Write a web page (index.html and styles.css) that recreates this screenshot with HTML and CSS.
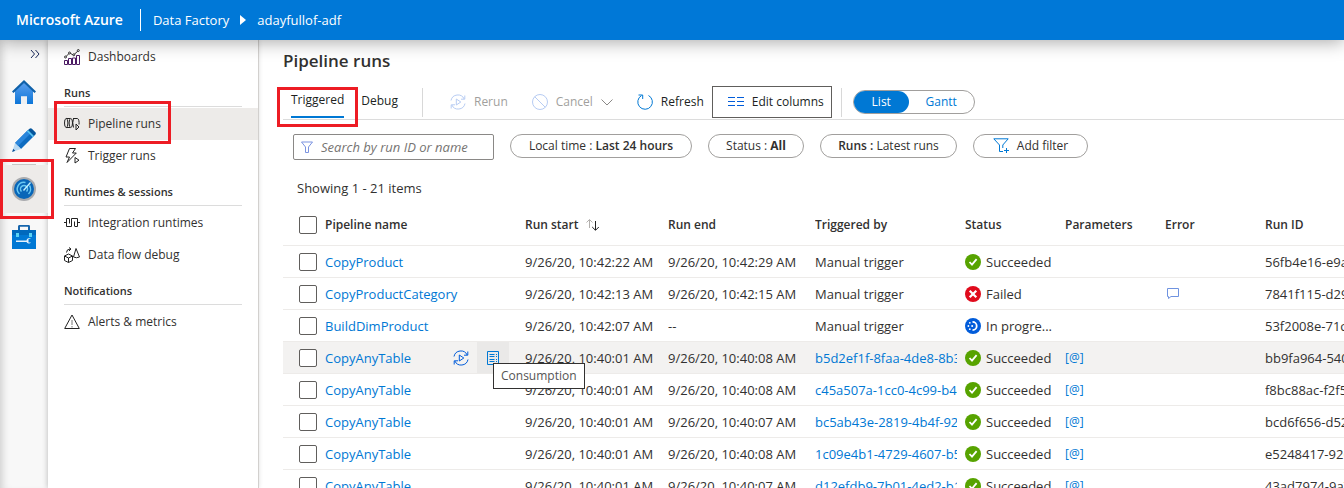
FILE: index.html
```html
<!DOCTYPE html>
<html lang="en">
<head>
<meta charset="utf-8">
<meta name="viewport" content="width=device-width, initial-scale=1">
<title>Pipeline runs - Data Factory</title>
<link rel="stylesheet" href="styles.css">
</head>
<body>
<svg class="sprite" aria-hidden="true">
  <symbol id="ok" viewBox="0 0 16 16"><circle cx="8" cy="8" r="8" fill="#57a300"/><path d="M4.500 8l2.500 2.600 4.600-5.400" fill="none" stroke="#fff" stroke-width="1.800"/></symbol>
  <symbol id="fail" viewBox="0 0 16 16"><circle cx="8" cy="8" r="8" fill="#e00b1c"/><path d="M4.700 4.700l6.600 6.600M11.300 4.700l-6.600 6.600" stroke="#fff" stroke-width="2.200"/></symbol>
  <symbol id="progress" viewBox="0 0 16 16"><circle cx="8" cy="8" r="8" fill="#015cda"/><path d="M7.500 3.800a4.200 4.200 0 0 1 0 8.400" fill="none" stroke="#fff" stroke-width="1.800"/><g fill="#fff"><circle cx="4.800" cy="4.800" r=".9"/><circle cx="3.400" cy="8" r=".9"/><circle cx="4.800" cy="11.200" r=".9"/><circle cx="7.200" cy="8" r="1"/></g></symbol>
  <symbol id="rerun" viewBox="0 0 16 16"><path d="M1 6.500A7 7 0 0 1 14.200 5M15 9.500A7 7 0 0 1 1.800 11M14.800 1.500V5.200H11M1.200 14.500V10.800H5M6.300 5v6l4.500-3z" fill="none" stroke="currentColor"/></symbol>
</svg>

<header class="topbar">
  <a class="brand" href="#">Microsoft Azure</a>
  <nav class="crumbs" aria-label="Breadcrumb">
    <a href="#">Data Factory</a>
    <svg class="crumb-arrow" viewBox="0 0 6 10"><path d="M0 0l6 5-6 5z" fill="#fff"/></svg>
    <a href="#">adayfullof-adf</a>
  </nav>
</header>

<div class="shell">
  <nav class="rail" aria-label="Hubs">
    <button class="expand" aria-label="Expand"><svg width="10" height="10" viewBox="0 0 10 10"><path d="M1 1l3.500 4L1 9M5.500 1L9 5 5.500 9" fill="none" stroke="#1b2a5c"/></svg></button>
    <a class="hub" href="#" aria-label="Home"><svg width="24" height="24" viewBox="0 0 24 24"><defs><linearGradient id="hg" x1="0" y1="0" x2="0" y2="1"><stop offset="0" stop-color="#5ea0ef"/><stop offset="1" stop-color="#0d76d8"/></linearGradient></defs><path d="M12 1.500L3 10.500V24h6v-7.500h6V24h6V10.500z" fill="url(#hg)"/><path d="M9 16.500h6V24H9z" fill="#eef0f2"/><path d="M12 0L0 11.500 1.500 13 12 3l10.500 10 1.500-1.500z" fill="#0f61a9"/></svg></a>
    <a class="hub" href="#" aria-label="Author"><svg width="24" height="24" viewBox="0 0 24 24"><path d="M3 15L15.500 2.500l6 6L9 21z" fill="#0f6cc0"/><path d="M3 15L15.500 2.500l3 3L6 18z" fill="#2a86dc"/><path d="M15.500 2.500L17.500.7q1.200-1 2.400 0l3.500 3.600q.9 1 0 2.200L21.500 8.500z" fill="#05559c"/><path d="M14.800 3.200l1.200-1.200 6 6-1.200 1.200z" fill="#5ac4f1"/><path d="M3 15l6 6-8.800 3z" fill="#b9d9f2"/><path d="M1.200 20.800l2 2-3 1.200z" fill="#0a4f95"/></svg></a>
    <a class="hub active" href="#" aria-label="Monitor" aria-current="page"><svg width="24" height="24" viewBox="0 0 24 24"><circle cx="12" cy="12" r="12" fill="#a9abae"/><circle cx="12" cy="12" r="10" fill="#0866b8"/><path d="M7.500 17a6.700 6.700 0 0 1 6-11.500" fill="none" stroke="#69c8f2" stroke-width="1.500"/><path d="M17.500 8.500a6.700 6.700 0 0 1-1 8.500" fill="none" stroke="#69c8f2" stroke-width="1.500"/><path d="M9.500 14.500a3.500 3.500 0 1 1 5 0" fill="none" stroke="#69c8f2" stroke-width="1.500"/><path d="M11 13l7-8 1 1-7 8z" fill="#c3f1ff"/></svg></a>
    <a class="hub" href="#" aria-label="Manage"><svg width="24" height="24" viewBox="0 0 24 24"><path d="M7 5V1.500q0-.7 1-.7h8q1 0 1 .7V5" fill="none" stroke="#1766ad" stroke-width="2"/><path d="M0 5h24v19H0z" fill="#0078d4"/><path d="M0 5h24v5H0z" fill="#0069bd"/><path d="M4 8h3v4H4zM17 8h3v4h-3z" fill="#5ad2f4"/><path d="M4 15.500h10.500a2.600 2.600 0 0 1 4.500-1.500h-2.500v3.500H19a2.600 2.600 0 0 1-4.500-.5H4z" fill="#e6f2fb"/></svg></a>
  </nav>

  <nav class="side" aria-label="Monitor">
    <a class="side-item" href="#"><svg class="ico" viewBox="0 0 16 16" fill="none"><path d="M.5 15.500v-4h3v4zM4.500 15.500v-6h3v6zM8.500 15.500V9h3v6.500zM12.500 15.500v-9h3v9z" stroke="#4b1a63"/><path d="M1.500 8l4-4 4 2 5-4.500" stroke="#333"/><g fill="#fff" stroke="#333"><circle cx="1.500" cy="8" r="1"/><circle cx="5.500" cy="4" r="1"/><circle cx="9.800" cy="5.800" r="1"/><circle cx="14.300" cy="1.500" r="1"/></g></svg>Dashboards</a>
    <h2 class="side-title">Runs</h2>
    <a class="side-item current" href="#" aria-current="page"><svg class="ico" viewBox="0 0 16 16" fill="none" stroke="#222"><ellipse cx="2.200" cy="7" rx="1.700" ry="4.500"/><path d="M2.200 2.500h4M2.200 11.500h4M9 2.500h4.500a1.800 4.500 0 0 1 1.500 6"/><ellipse cx="6.800" cy="7" rx="1.700" ry="4.500"/><path d="M9.500 2.500q-1.500 4 0 9M12 8v6l3-3z"/></svg>Pipeline runs</a>
    <a class="side-item" href="#"><svg class="ico" viewBox="0 0 16 16" fill="none" stroke="#222"><path d="M5.500.5h6L8.500 5h3.800L3 14.500 5.500 9H2zM11 9.500v5.500l4-2.800z"/></svg>Trigger runs</a>
    <h2 class="side-title">Runtimes &amp; sessions</h2>
    <a class="side-item" href="#"><svg class="ico" viewBox="0 0 16 16" fill="none" stroke="#222"><path d="M0 7.500h2.500M13.500 7.500H16M5 3.500H2.500v8H7.500V3.500H13.500v8H11M5.500 3.500v5M10.500 11.500v-5"/></svg>Integration runtimes</a>
    <a class="side-item" href="#"><svg class="ico" viewBox="0 0 16 16" fill="none" stroke="#222"><path d="M.5 9l4-2 4 2v4.500l-4 2-4-2zM.5 9l4 2 4-2M4.500 11v4.500M2.500 5.500q0-3.500 4-3.500M5 .5L7 2 5 4M12 1.500l3.500 8.500q-3 1.500-6 0z"/></svg>Data flow debug</a>
    <h2 class="side-title">Notifications</h2>
    <a class="side-item" href="#"><svg class="ico" viewBox="0 0 16 16" fill="none" stroke="#222"><path d="M8 1l7.300 13.500H.7z"/><path d="M8 6v5M8 12v1.500" stroke="#777"/></svg>Alerts &amp; metrics</a>
  </nav>

  <main class="main">
    <h1 class="title">Pipeline runs</h1>
    <div class="toolbar">
      <button class="tab selected">Triggered</button>
      <button class="tab">Debug</button>
      <span class="sep"></span>
      <button class="cmd" disabled><svg class="ico" viewBox="0 0 16 16"><use href="#rerun"/></svg>Rerun</button>
      <button class="cmd" disabled><svg class="ico" viewBox="0 0 16 16" fill="none" stroke="currentColor"><circle cx="8" cy="8" r="7.500"/><path d="M2.700 2.700l10.600 10.600"/></svg>Cancel<svg class="chev" viewBox="0 0 12 7"><path d="M.5.500L6 6 11.500.500" fill="none" stroke="#8a8886"/></svg></button>
      <button class="cmd"><svg class="ico" viewBox="0 0 16 16" fill="none" stroke="currentColor"><path d="M11.500 1.500A7.300 7.300 0 1 1 4.500 1.600M1.500 1h4.200v4"/></svg>Refresh</button>
      <button class="cmd framed"><svg class="ico" viewBox="0 0 16 16" stroke="#015cda"><path d="M0 3.500h7M9 3.500h7M0 7.500h7M9 7.500h7M0 11.500h7M9 11.500h7"/></svg>Edit columns</button>
      <span class="sep last"></span>
      <div class="toggle"><button class="opt on">List</button><button class="opt">Gantt</button></div>
    </div>

    <div class="filters">
      <label class="search"><svg viewBox="0 0 12 12"><path d="M.5 1h11L7.500 6v5.500h-3V6z" fill="none" stroke="#7b93e0"/></svg><input type="text" placeholder="Search by run ID or name" aria-label="Search by run ID or name"></label>
      <button class="pill time">Local time :&nbsp;<b>Last 24 hours</b></button>
      <button class="pill status-pill">Status :&nbsp;<b class="strong">All</b></button>
      <button class="pill runs"><b>Runs :</b>&nbsp;Latest runs</button>
      <button class="pill add"><svg class="ico" viewBox="0 0 16 16" fill="none" stroke="#0078d4"><path d="M10 13.500H6.500V7L.8.800h14.400L9.800 7v3M13.500 10v5M11 12.500h5"/></svg>Add filter</button>
    </div>

    <p class="count">Showing 1 - 21 items</p>

    <table class="grid">
      <colgroup><col class="c-check"><col class="c-name"><col class="c-start"><col class="c-end"><col class="c-by"><col class="c-sm"><col class="c-sm"><col class="c-sm"><col></colgroup>
      <thead>
        <tr><th><input type="checkbox" aria-label="Select all"></th><th>Pipeline name</th><th>Run start<svg class="sort" viewBox="0 0 16 12" fill="none"><path d="M4.500 9V.8M1.500 3.500l3-3 3 3" stroke="#b3b0ad"/><path d="M10.500 2v9M7.200 8l3.300 3.300L13.800 8" stroke="#222"/></svg></th><th>Run end</th><th>Triggered by</th><th>Status</th><th>Parameters</th><th>Error</th><th>Run ID</th></tr>
      </thead>
      <tbody>
        <tr><td><input type="checkbox" aria-label="Select CopyProduct"></td><td><a href="#">CopyProduct</a></td><td>9/26/20, 10:42:22 AM</td><td>9/26/20, 10:42:29 AM</td><td>Manual trigger</td><td><svg class="state"><use href="#ok"/></svg>Succeeded</td><td></td><td></td><td>56fb4e16-e9a</td></tr>
        <tr><td><input type="checkbox" aria-label="Select CopyProductCategory"></td><td><a href="#">CopyProductCategory</a></td><td>9/26/20, 10:42:13 AM</td><td>9/26/20, 10:42:15 AM</td><td>Manual trigger</td><td><svg class="state"><use href="#fail"/></svg>Failed</td><td></td><td><button class="note" aria-label="Error details"><svg width="14" height="12" viewBox="0 0 14 12"><path d="M1.500 1.500h11v8H5L2.500 11.500v-2h-1z" fill="none" stroke="#6f93e0"/></svg></button></td><td>7841f115-d29</td></tr>
        <tr><td><input type="checkbox" aria-label="Select BuildDimProduct"></td><td><a href="#">BuildDimProduct</a></td><td>9/26/20, 10:42:07 AM</td><td>--</td><td>Manual trigger</td><td><svg class="state"><use href="#progress"/></svg>In progre...</td><td></td><td></td><td>53f2008e-71c</td></tr>
        <tr class="hovered"><td><input type="checkbox" aria-label="Select CopyAnyTable"></td><td class="with-actions"><div class="name-row"><a href="#">CopyAnyTable</a><button class="act" aria-label="Rerun"><svg class="ico" viewBox="0 0 16 16"><use href="#rerun"/></svg></button><button class="act hot" aria-label="Consumption"><svg width="12" height="14" viewBox="0 0 12 14" fill="none" stroke="#0078d4"><path d="M.5.500h11v13H.5zM2.500 3.500h5M2.500 5.500h5M2.500 8.500h5M2.500 10.500h5M9 3.500h1M9 5.500h1M9 8.500h1M9 10.500h1"/></svg></button></div><span class="tip" role="tooltip">Consumption</span></td><td>9/26/20, 10:40:01 AM</td><td>9/26/20, 10:40:08 AM</td><td><a href="#">b5d2ef1f-8faa-4de8-8b3</a></td><td><svg class="state"><use href="#ok"/></svg>Succeeded</td><td><a class="param" href="#">[@]</a></td><td></td><td>bb9fa964-540</td></tr>
        <tr><td><input type="checkbox" aria-label="Select CopyAnyTable"></td><td><a href="#">CopyAnyTable</a></td><td>9/26/20, 10:40:01 AM</td><td>9/26/20, 10:40:08 AM</td><td><a href="#">c45a507a-1cc0-4c99-b4c</a></td><td><svg class="state"><use href="#ok"/></svg>Succeeded</td><td><a class="param" href="#">[@]</a></td><td></td><td>f8bc88ac-f2f5</td></tr>
        <tr><td><input type="checkbox" aria-label="Select CopyAnyTable"></td><td><a href="#">CopyAnyTable</a></td><td>9/26/20, 10:40:01 AM</td><td>9/26/20, 10:40:07 AM</td><td><a href="#">bc5ab43e-2819-4b4f-923</a></td><td><svg class="state"><use href="#ok"/></svg>Succeeded</td><td><a class="param" href="#">[@]</a></td><td></td><td>bcd6f656-d52</td></tr>
        <tr><td><input type="checkbox" aria-label="Select CopyAnyTable"></td><td><a href="#">CopyAnyTable</a></td><td>9/26/20, 10:40:01 AM</td><td>9/26/20, 10:40:08 AM</td><td><a href="#">1c09e4b1-4729-4607-b5</a></td><td><svg class="state"><use href="#ok"/></svg>Succeeded</td><td><a class="param" href="#">[@]</a></td><td></td><td>e5248417-926</td></tr>
        <tr><td><input type="checkbox" aria-label="Select CopyAnyTable"></td><td><a href="#">CopyAnyTable</a></td><td>9/26/20, 10:40:01 AM</td><td>9/26/20, 10:40:07 AM</td><td><a href="#">d12efdb9-7b01-4ed2-b1</a></td><td><svg class="state"><use href="#ok"/></svg>Succeeded</td><td><a class="param" href="#">[@]</a></td><td></td><td>43ad7974-9a7</td></tr>
      </tbody>
    </table>
  </main>
</div>
</body>
</html>
```
FILE: styles.css
```css
*, *::before, *::after { box-sizing: border-box; }
body {
  margin: 0;
  height: 100vh;
  display: flex;
  flex-direction: column;
  overflow: hidden;
  background: #fff;
  color: #323130;
  font: 12px/16px "Segoe UI", "Open Sans", "Noto Sans", sans-serif;
}
a { color: #0078d4; text-decoration: none; }
button { font: inherit; color: inherit; background: none; border: 0; padding: 0; }
b { font-weight: 600; }
.sprite { display: none; }
.ico { width: 16px; height: 16px; flex: none; }

.topbar {
  flex: none;
  position: relative;
  z-index: 5;
  display: flex;
  align-items: center;
  height: 40px;
  padding-left: 16px;
  background: #0078d7;
  box-shadow: 0 2px 18px rgba(0, 0, 0, .35);
}
.topbar a { color: #fff; }
.topbar .brand { font-size: 14px; font-weight: 600; padding-right: 17px; }
.crumbs { display: flex; align-items: center; height: 22px; padding-left: 12px; border-left: 1px solid #fff; font-size: 13px; }
.crumb-arrow { width: 6px; height: 10px; margin: 0 11px; }

.shell { flex: 1; display: flex; min-height: 0; }

.rail {
  flex: none;
  width: 48px;
  display: flex;
  flex-direction: column;
  background: #f8f8f8;
  box-shadow: inset 8px 0 8px -6px rgba(0, 0, 0, .18);
}
.expand { height: 28px; padding: 0 8px 0 0; text-align: right; }
.expand svg { display: block; margin-left: auto; }
.hub { position: relative; display: flex; align-items: center; justify-content: center; height: 48px; }
.hub.active { margin-top: 1px; background: #edebe9; }
.hub.active::before { content: ""; position: absolute; top: -1px; left: 12px; width: 24px; height: 1px; background: #c8c6c4; }
.hub.active::after { content: ""; position: absolute; z-index: 3; inset: -6px; left: 0; border: 3px solid #ed1c24; }

.side {
  flex: none;
  width: 211px;
  padding-top: 1px;
  border-right: 1px solid #d2d0ce;
  box-shadow: -1px 0 5px rgba(0, 0, 0, .2);
}
.side-item { position: relative; display: flex; align-items: center; gap: 8px; height: 32px; padding-left: 16px; color: #323130; }
.side-item.current { background: #edebe9; }
.side-item.current::after { content: ""; position: absolute; z-index: 3; top: -7px; bottom: -4px; left: 6px; width: 117px; border: 3px solid #ed1c24; }
.side-title { margin: 0 16px 1px; padding: 12px 0 5px; border-bottom: 1px solid #dcdcdc; font-size: 11px; line-height: 16px; font-weight: 600; }

.main { flex: 1; min-width: 0; overflow: hidden; padding-left: 24px; }
.title { margin: 0; padding: 9px 0 13px; font-size: 17px; line-height: 24px; font-weight: 600; }
.toolbar { display: flex; align-items: flex-start; height: 34px; padding-left: 8px; border-bottom: 1px solid #dcdcdc; }
.tab { padding: 0; margin-right: 17px; height: 32px; border-bottom: 2px solid transparent; color: #201f1e; }
.tab.selected { position: relative; padding-bottom: 2px; border-bottom-color: #0078d4; }
.tab.selected::after { content: ""; position: absolute; z-index: 3; inset: 1px -14px -11px; border: 3px solid #ed1c24; }
.tab + .tab { margin-right: 8px; }
.sep { width: 1px; height: 29px; margin: 2px 27px 0 16px; background: #d8d8d8; }
.sep.last { margin: 2px 11px 0 9px; }
.cmd { display: flex; align-items: center; gap: 8px; height: 32px; margin-right: 24px; color: #201f1e; }
.cmd .ico { color: #0078d4; }
.cmd:disabled { color: #a19f9d; }
.cmd:disabled .ico { color: #b7ccf3; }
.cmd.framed { margin: 0 0 0 -16px; padding: 0 7px 0 15px; border: 1px solid #605e5c; }
.chev { width: 12px; height: 7px; }
.toggle { display: flex; height: 24px; margin-top: 4px; border: 1px solid #a19f9d; border-radius: 12px; }
.opt { width: 65px; color: #0078d4; }
.opt.on { width: 55px; background: #0078d4; color: #fff; border-radius: 12px; }

.filters { display: flex; align-items: flex-start; gap: 16px; padding: 14px 0 0 10px; }
.search { display: flex; align-items: center; gap: 8px; width: 201px; height: 26px; padding: 0 7px; border: 1px solid #8a8886; border-radius: 2px; font-size: 13px; }
.search svg { flex: none; width: 12px; height: 12px; }
.search input { flex: 1; min-width: 0; border: 0; padding: 0; outline: 0; background: none; font: inherit; font-style: italic; }
.search input::placeholder { color: #767472; opacity: 1; }
.pill { display: flex; align-items: center; justify-content: center; height: 24px; border: 1px solid #a19f9d; border-radius: 12px; color: #323130; white-space: nowrap; }
.pill.time { width: 182px; }
.pill.status-pill { width: 96px; }
.pill.runs { width: 137px; }
.pill.add { width: 115px; gap: 8px; }
.strong { font-weight: 700; }

.count { margin: 0; padding: 20px 0 8px 14px; font-size: 13px; line-height: 16px; }

.grid { width: 100%; table-layout: fixed; border-collapse: separate; border-spacing: 0; font-size: 13px; }
.c-check { width: 42px; }
.c-name { width: 200px; }
.c-start { width: 143px; }
.c-end { width: 147px; }
.c-by { width: 150px; }
.c-sm { width: 100px; }
.grid th, .grid td { height: 32px; padding: 0; border-bottom: 1px solid #edebe9; text-align: left; vertical-align: middle; white-space: nowrap; overflow: hidden; }
.grid th { height: 42px; font-size: 12px; font-weight: 600; }
.grid td:nth-child(5) a { display: block; width: 142px; overflow: hidden; }
.grid input { appearance: none; display: block; width: 18px; height: 18px; margin: 0 0 0 16px; border: 1px solid #605e5c; border-radius: 2px; background: #fff; }
.sort { width: 16px; height: 12px; margin-left: 6px; vertical-align: -2px; }
.state { width: 16px; height: 16px; margin-right: 5px; vertical-align: -3px; }
.hovered td { background: #f3f2f1; }
.grid td.with-actions { position: relative; overflow: visible; }
.name-row { display: flex; align-items: center; height: 31px; }
.name-row a { flex: 1; }
.act { display: flex; align-items: center; justify-content: center; width: 32px; height: 31px; color: #015cda; }
.act.hot { background: #eae9e8; margin-right: 16px; }
.tip { position: absolute; z-index: 4; top: 21px; left: 168px; padding: 4px 7px; border: 1px solid #323130; background: #fff; font-size: 12px; color: #555; }
.param { font-size: 12px; }
.note { display: block; margin-left: 1px; }
```
